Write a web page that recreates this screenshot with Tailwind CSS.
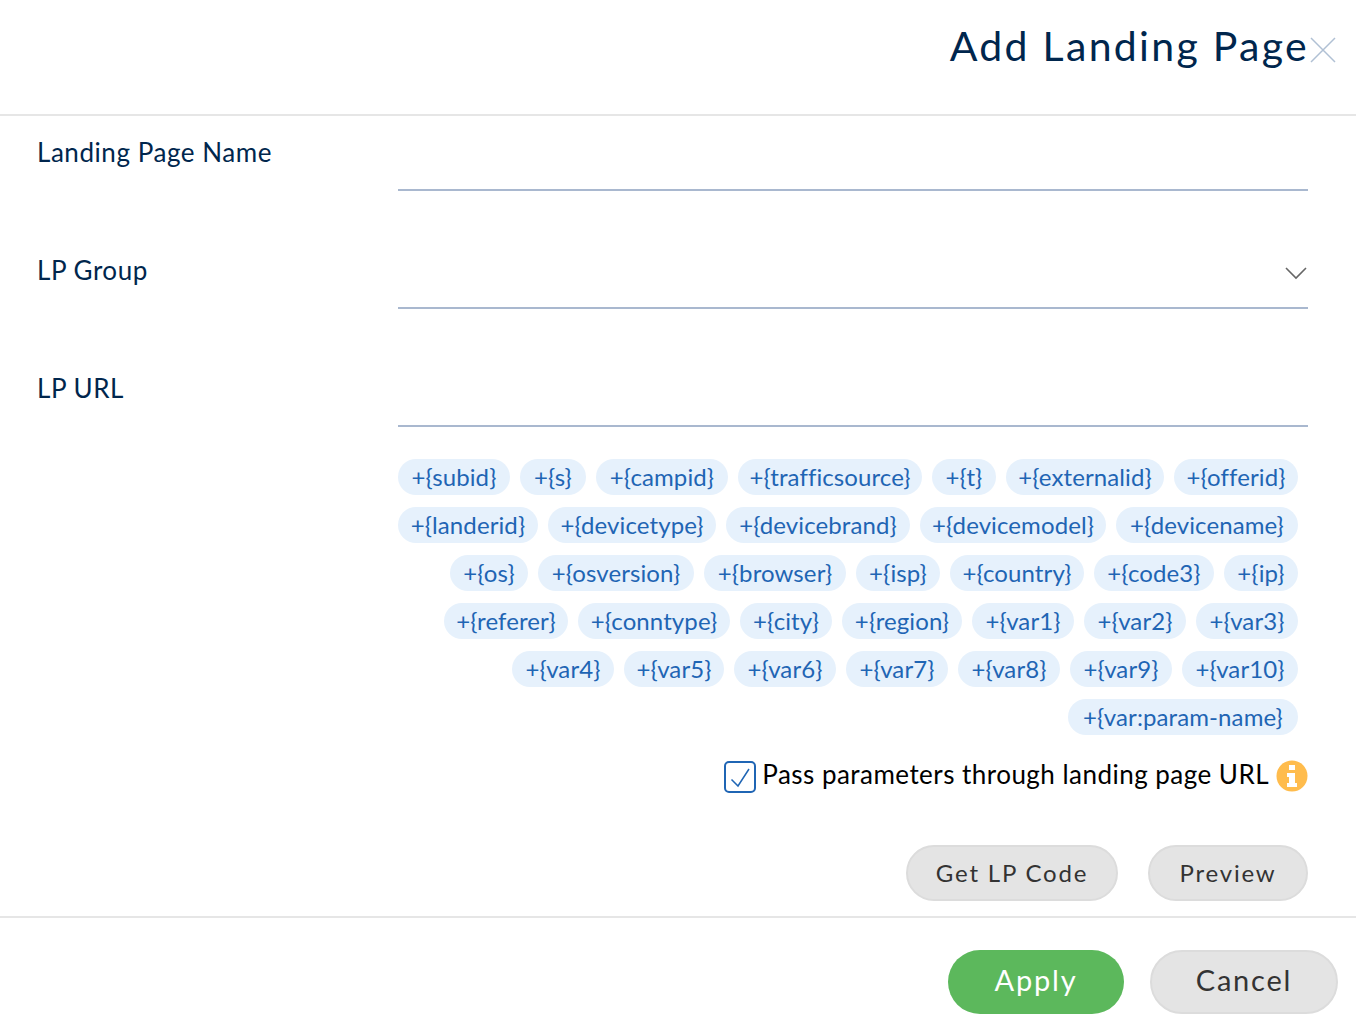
<!DOCTYPE html>
<html lang="en">
<head>
<meta charset="UTF-8">
<title>Add Landing Page</title>
<script src="https://cdn.jsdelivr.net/npm/@tailwindcss/browser@4"></script>
</head>
<body class="bg-white font-['Lato',sans-serif] text-[#00264d] h-[1036px] overflow-hidden [font-variant-ligatures:none]">
  <header class="h-[116px] border-b-2 border-[#e6e6e6] flex justify-end items-start pt-[19px] pr-[20px]">
    <h1 class="text-[41px] leading-[54px] tracking-[2.3px] font-normal">Add Landing Page</h1>
    <button class="mt-[18px] ml-[1px]">
      <svg class="w-[26px] h-[26px]" viewBox="0 0 26 26" fill="none" stroke="#b0c0d4" stroke-width="1.5"><path d="M1 1L25 25M25 1L1 25"/></svg>
    </button>
  </header>

  <section class="pl-[37px] pr-[48px]">
    <div class="flex h-[118px]">
      <label class="w-[361px] text-[26px] tracking-[0.55px] leading-[34px] pt-[19px]">Landing Page Name</label>
      <div class="flex-1 h-[75px] border-b-2 border-[#a9b8cf]"></div>
    </div>
    <div class="flex h-[118px]">
      <label class="w-[361px] text-[26px] tracking-[0.55px] leading-[34px] pt-[19px]">LP Group</label>
      <div class="flex-1 h-[75px] border-b-2 border-[#a9b8cf] flex justify-end items-start pt-[32px] pr-[1px]">
        <svg class="w-[22px] h-[14px]" viewBox="0 0 22 14" fill="none" stroke="#666" stroke-width="1.6"><path d="M1 2L11 12L21 2"/></svg>
      </div>
    </div>
    <div class="flex h-[118px]">
      <label class="w-[361px] text-[26px] tracking-[0.55px] leading-[34px] pt-[19px]">LP URL</label>
      <div class="flex-1 h-[75px] border-b-2 border-[#a9b8cf]"></div>
    </div>
  </section>

  <section class="pr-[58px] mt-[-11px] flex flex-col gap-[12px] text-[24px] tracking-[0.1px] text-center leading-[36px] text-[#1f65b4]">
    <div class="flex justify-end gap-[10px]">
      <span class="h-[36px] w-[112px] rounded-full bg-[#e6f1fc]">+{subid}</span>
      <span class="h-[36px] w-[66px] rounded-full bg-[#e6f1fc]">+{s}</span>
      <span class="h-[36px] w-[132px] rounded-full bg-[#e6f1fc]">+{campid}</span>
      <span class="h-[36px] w-[184px] rounded-full bg-[#e6f1fc]">+{trafficsource}</span>
      <span class="h-[36px] w-[64px] rounded-full bg-[#e6f1fc]">+{t}</span>
      <span class="h-[36px] w-[158px] rounded-full bg-[#e6f1fc]">+{externalid}</span>
      <span class="h-[36px] w-[124px] rounded-full bg-[#e6f1fc]">+{offerid}</span>
    </div>
    <div class="flex justify-end gap-[10px]">
      <span class="h-[36px] w-[140px] rounded-full bg-[#e6f1fc]">+{landerid}</span>
      <span class="h-[36px] w-[168px] rounded-full bg-[#e6f1fc]">+{devicetype}</span>
      <span class="h-[36px] w-[184px] rounded-full bg-[#e6f1fc]">+{devicebrand}</span>
      <span class="h-[36px] w-[186px] rounded-full bg-[#e6f1fc]">+{devicemodel}</span>
      <span class="h-[36px] w-[182px] rounded-full bg-[#e6f1fc]">+{devicename}</span>
    </div>
    <div class="flex justify-end gap-[10px]">
      <span class="h-[36px] w-[78px] rounded-full bg-[#e6f1fc]">+{os}</span>
      <span class="h-[36px] w-[156px] rounded-full bg-[#e6f1fc]">+{osversion}</span>
      <span class="h-[36px] w-[142px] rounded-full bg-[#e6f1fc]">+{browser}</span>
      <span class="h-[36px] w-[84px] rounded-full bg-[#e6f1fc]">+{isp}</span>
      <span class="h-[36px] w-[134px] rounded-full bg-[#e6f1fc]">+{country}</span>
      <span class="h-[36px] w-[120px] rounded-full bg-[#e6f1fc]">+{code3}</span>
      <span class="h-[36px] w-[74px] rounded-full bg-[#e6f1fc]">+{ip}</span>
    </div>
    <div class="flex justify-end gap-[10px]">
      <span class="h-[36px] w-[124px] rounded-full bg-[#e6f1fc]">+{referer}</span>
      <span class="h-[36px] w-[152px] rounded-full bg-[#e6f1fc]">+{conntype}</span>
      <span class="h-[36px] w-[92px] rounded-full bg-[#e6f1fc]">+{city}</span>
      <span class="h-[36px] w-[120px] rounded-full bg-[#e6f1fc]">+{region}</span>
      <span class="h-[36px] w-[102px] rounded-full bg-[#e6f1fc]">+{var1}</span>
      <span class="h-[36px] w-[102px] rounded-full bg-[#e6f1fc]">+{var2}</span>
      <span class="h-[36px] w-[102px] rounded-full bg-[#e6f1fc]">+{var3}</span>
    </div>
    <div class="flex justify-end gap-[10px]">
      <span class="h-[36px] w-[102px] rounded-full bg-[#e6f1fc]">+{var4}</span>
      <span class="h-[36px] w-[100px] rounded-full bg-[#e6f1fc]">+{var5}</span>
      <span class="h-[36px] w-[102px] rounded-full bg-[#e6f1fc]">+{var6}</span>
      <span class="h-[36px] w-[102px] rounded-full bg-[#e6f1fc]">+{var7}</span>
      <span class="h-[36px] w-[102px] rounded-full bg-[#e6f1fc]">+{var8}</span>
      <span class="h-[36px] w-[102px] rounded-full bg-[#e6f1fc]">+{var9}</span>
      <span class="h-[36px] w-[116px] rounded-full bg-[#e6f1fc]">+{var10}</span>
    </div>
    <div class="flex justify-end gap-[10px]">
      <span class="h-[36px] w-[230px] rounded-full bg-[#e6f1fc]">+{var:param-name}</span>
    </div>
  </section>

  <div class="flex justify-end items-start pr-[48px] mt-[24px] h-[62px]">
    <span class="w-[32px] h-[32px] mt-[2px] border-2 border-[#1f65b4] rounded-[5px] flex items-center justify-center">
      <svg class="w-[20px] h-[22px]" viewBox="0 0 20 22" fill="none" stroke="#1f65b4" stroke-width="1.5"><path d="M1.5 13.5L8 20L19 3"/></svg>
    </span>
    <span class="ml-[6px] text-[26px] tracking-[0.47px] leading-[30px] text-black">Pass parameters through landing page URL</span>
    <svg class="w-[32px] h-[32px] ml-[7px] mt-[1px]" viewBox="0 0 32 32"><circle cx="16" cy="16" r="15.5" fill="#ffbc4d"/><path fill="#fff" d="M13 5h6v5h-6zM11 13h8v10h2v4H11v-4h2v-6h-2z"/></svg>
  </div>

  <div class="flex justify-end gap-[30px] pr-[48px] mt-[24px] h-[73px] border-b-2 border-[#e6e6e6] text-[#333]">
    <button class="h-[56px] w-[212px] pb-[1px] rounded-full bg-[#e4e4e4] border-2 border-[#dcdcdc] text-[24px] tracking-[1.8px]">Get LP Code</button>
    <button class="h-[56px] w-[160px] pb-[1px] rounded-full bg-[#e4e4e4] border-2 border-[#dcdcdc] text-[24px] tracking-[1.8px]">Preview</button>
  </div>

  <footer class="flex justify-end gap-[26px] pr-[18px] pt-[32px]">
    <button class="h-[64px] w-[176px] pb-[4px] rounded-full bg-[#5cb85c] text-white text-[29px] tracking-[1.8px]">Apply</button>
    <button class="h-[64px] w-[188px] pb-[4px] rounded-full bg-[#e4e4e4] border-2 border-[#dcdcdc] text-[#333] text-[29px] tracking-[1.8px]">Cancel</button>
  </footer>
</body>
</html>
